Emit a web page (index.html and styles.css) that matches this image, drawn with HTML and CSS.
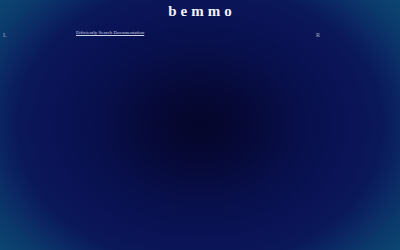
FILE: index.html
```html
<!DOCTYPE html>
<html>
<head>
<meta charset="utf-8">
<link rel="stylesheet" href="styles.css">
</head>
<body>
<header class="top">
  <h1 class="brand">bemmo</h1>
</header>
<div class="layout">
  <aside class="side side-left">L</aside>
  <main class="content">
    <a class="doc-link" href="#">Efficiently Search Documentation</a>
  </main>
  <aside class="side side-right">R</aside>
</div>
</body>
</html>
```
FILE: styles.css
```css
html, body {
  margin: 0;
  padding: 0;
  width: 400px;
  height: 250px;
  overflow: hidden;
}
body {
  font-family: "Liberation Serif", "Times New Roman", serif;
  color: #c8cce2;
  background: radial-gradient(ellipse 260px 200px at 50% 50%,
    #05062a 0%,
    #060937 18%,
    #08104c 40%,
    #0a1457 60%,
    #0a1859 70%,
    #0b2864 79%,
    #0b3a6c 89%,
    #0b4772 100%);
}
.top {
  display: flex;
  justify-content: center;
  padding-top: 3px;
}
.brand {
  margin: 0;
  font-size: 15px;
  line-height: 17px;
  font-weight: bold;
  letter-spacing: 4px;
  color: #f2f3f8;
  padding-left: 4px;
}
.layout {
  display: flex;
  margin-top: 10px;
  font-size: 5px;
  line-height: 6px;
}
.side {
  color: #a9b0cc;
  font-size: 6px;
  line-height: 7px;
  padding-top: 2px;
}
.side-left {
  width: 73px;
  padding-left: 3px;
}
.side-right {
  width: 84px;
  padding-left: 3px;
}
.content {
  flex: 1;
}
.doc-link {
  font-family: "Liberation Serif", "Times New Roman", serif;
  color: #cfd3e6;
  text-decoration: underline;
}
```
